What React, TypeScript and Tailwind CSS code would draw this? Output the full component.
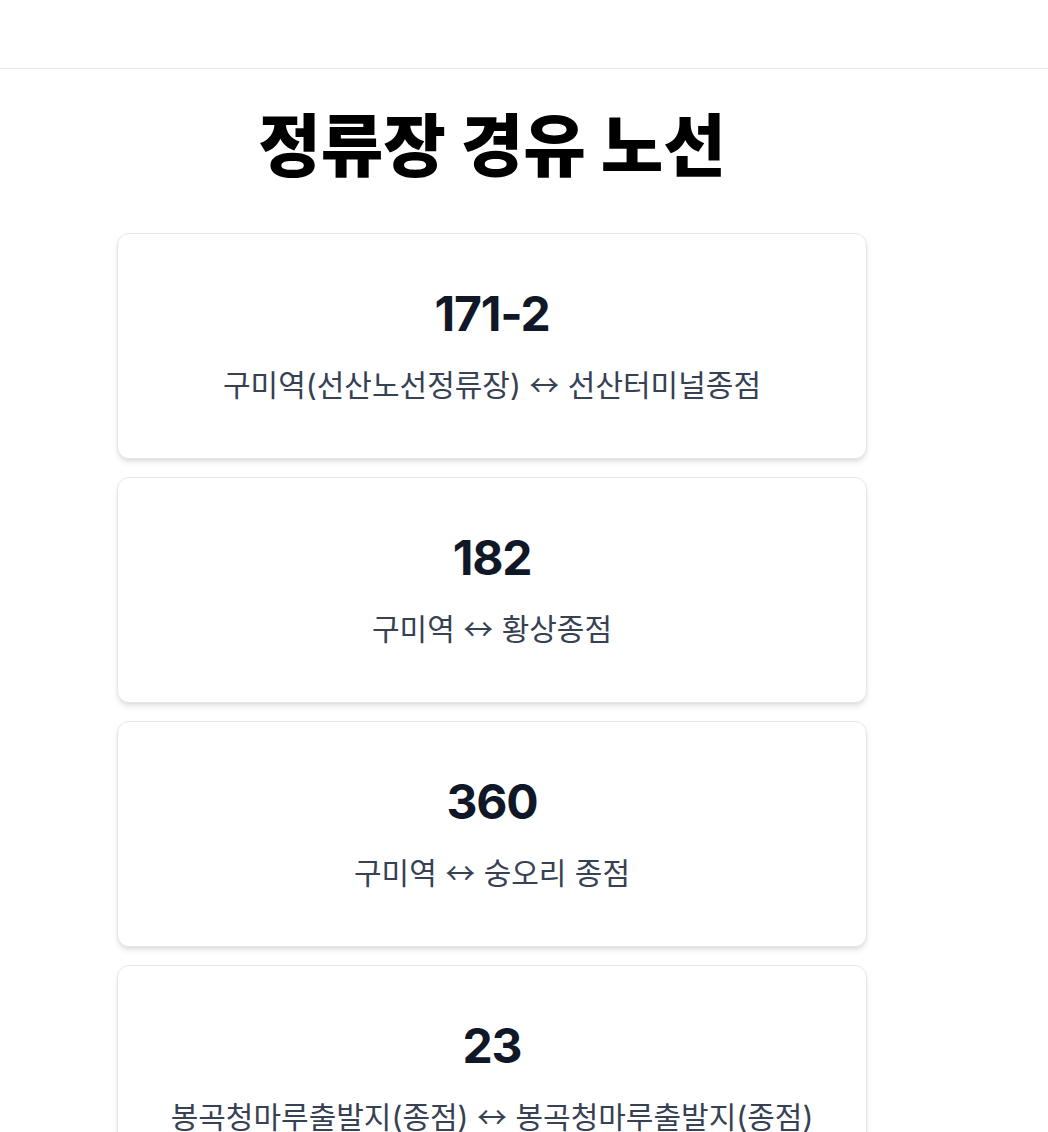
import React from 'react';

type Route = { no: string; from: string; to: string };

const routes: Route[] = [
  { no: '171-2', from: '구미역(선산노선정류장)', to: '선산터미널종점' },
  { no: '182', from: '구미역', to: '황상종점' },
  { no: '360', from: '구미역', to: '숭오리 종점' },
  { no: '23', from: '봉곡청마루출발지(종점)', to: '봉곡청마루출발지(종점)' },
];

const font = { fontFamily: 'Inter, "Noto Sans CJK KR", sans-serif' };
const arrowFont = { fontFamily: '"Noto Sans CJK KR", sans-serif' };

function RouteCard({ route }: { route: Route }) {
  return (
    <div className="flex h-[226px] w-[750px] flex-col items-center rounded-xl border border-gray-200 bg-white pt-14 shadow-md">
      <div className="text-5xl font-bold leading-none tracking-tight text-gray-900">{route.no}</div>
      <div className="mt-[25px] whitespace-nowrap text-[30px] leading-10 text-gray-700">
        {route.from} <span style={arrowFont}>↔</span> {route.to}
      </div>
    </div>
  );
}

export default function App() {
  return (
    <div className="min-h-screen bg-white" style={font}>
      <header className="h-[69px] border-b border-gray-200" />
      <main className="flex w-[984px] flex-col items-center">
        <h1 className="mt-[43px] text-[68px] font-extrabold leading-none text-black">정류장 경유 노선</h1>
        <div className="mt-[53px] flex flex-col gap-[18px]">
          {routes.map((r) => (
            <RouteCard key={r.no} route={r} />
          ))}
        </div>
      </main>
    </div>
  );
}
